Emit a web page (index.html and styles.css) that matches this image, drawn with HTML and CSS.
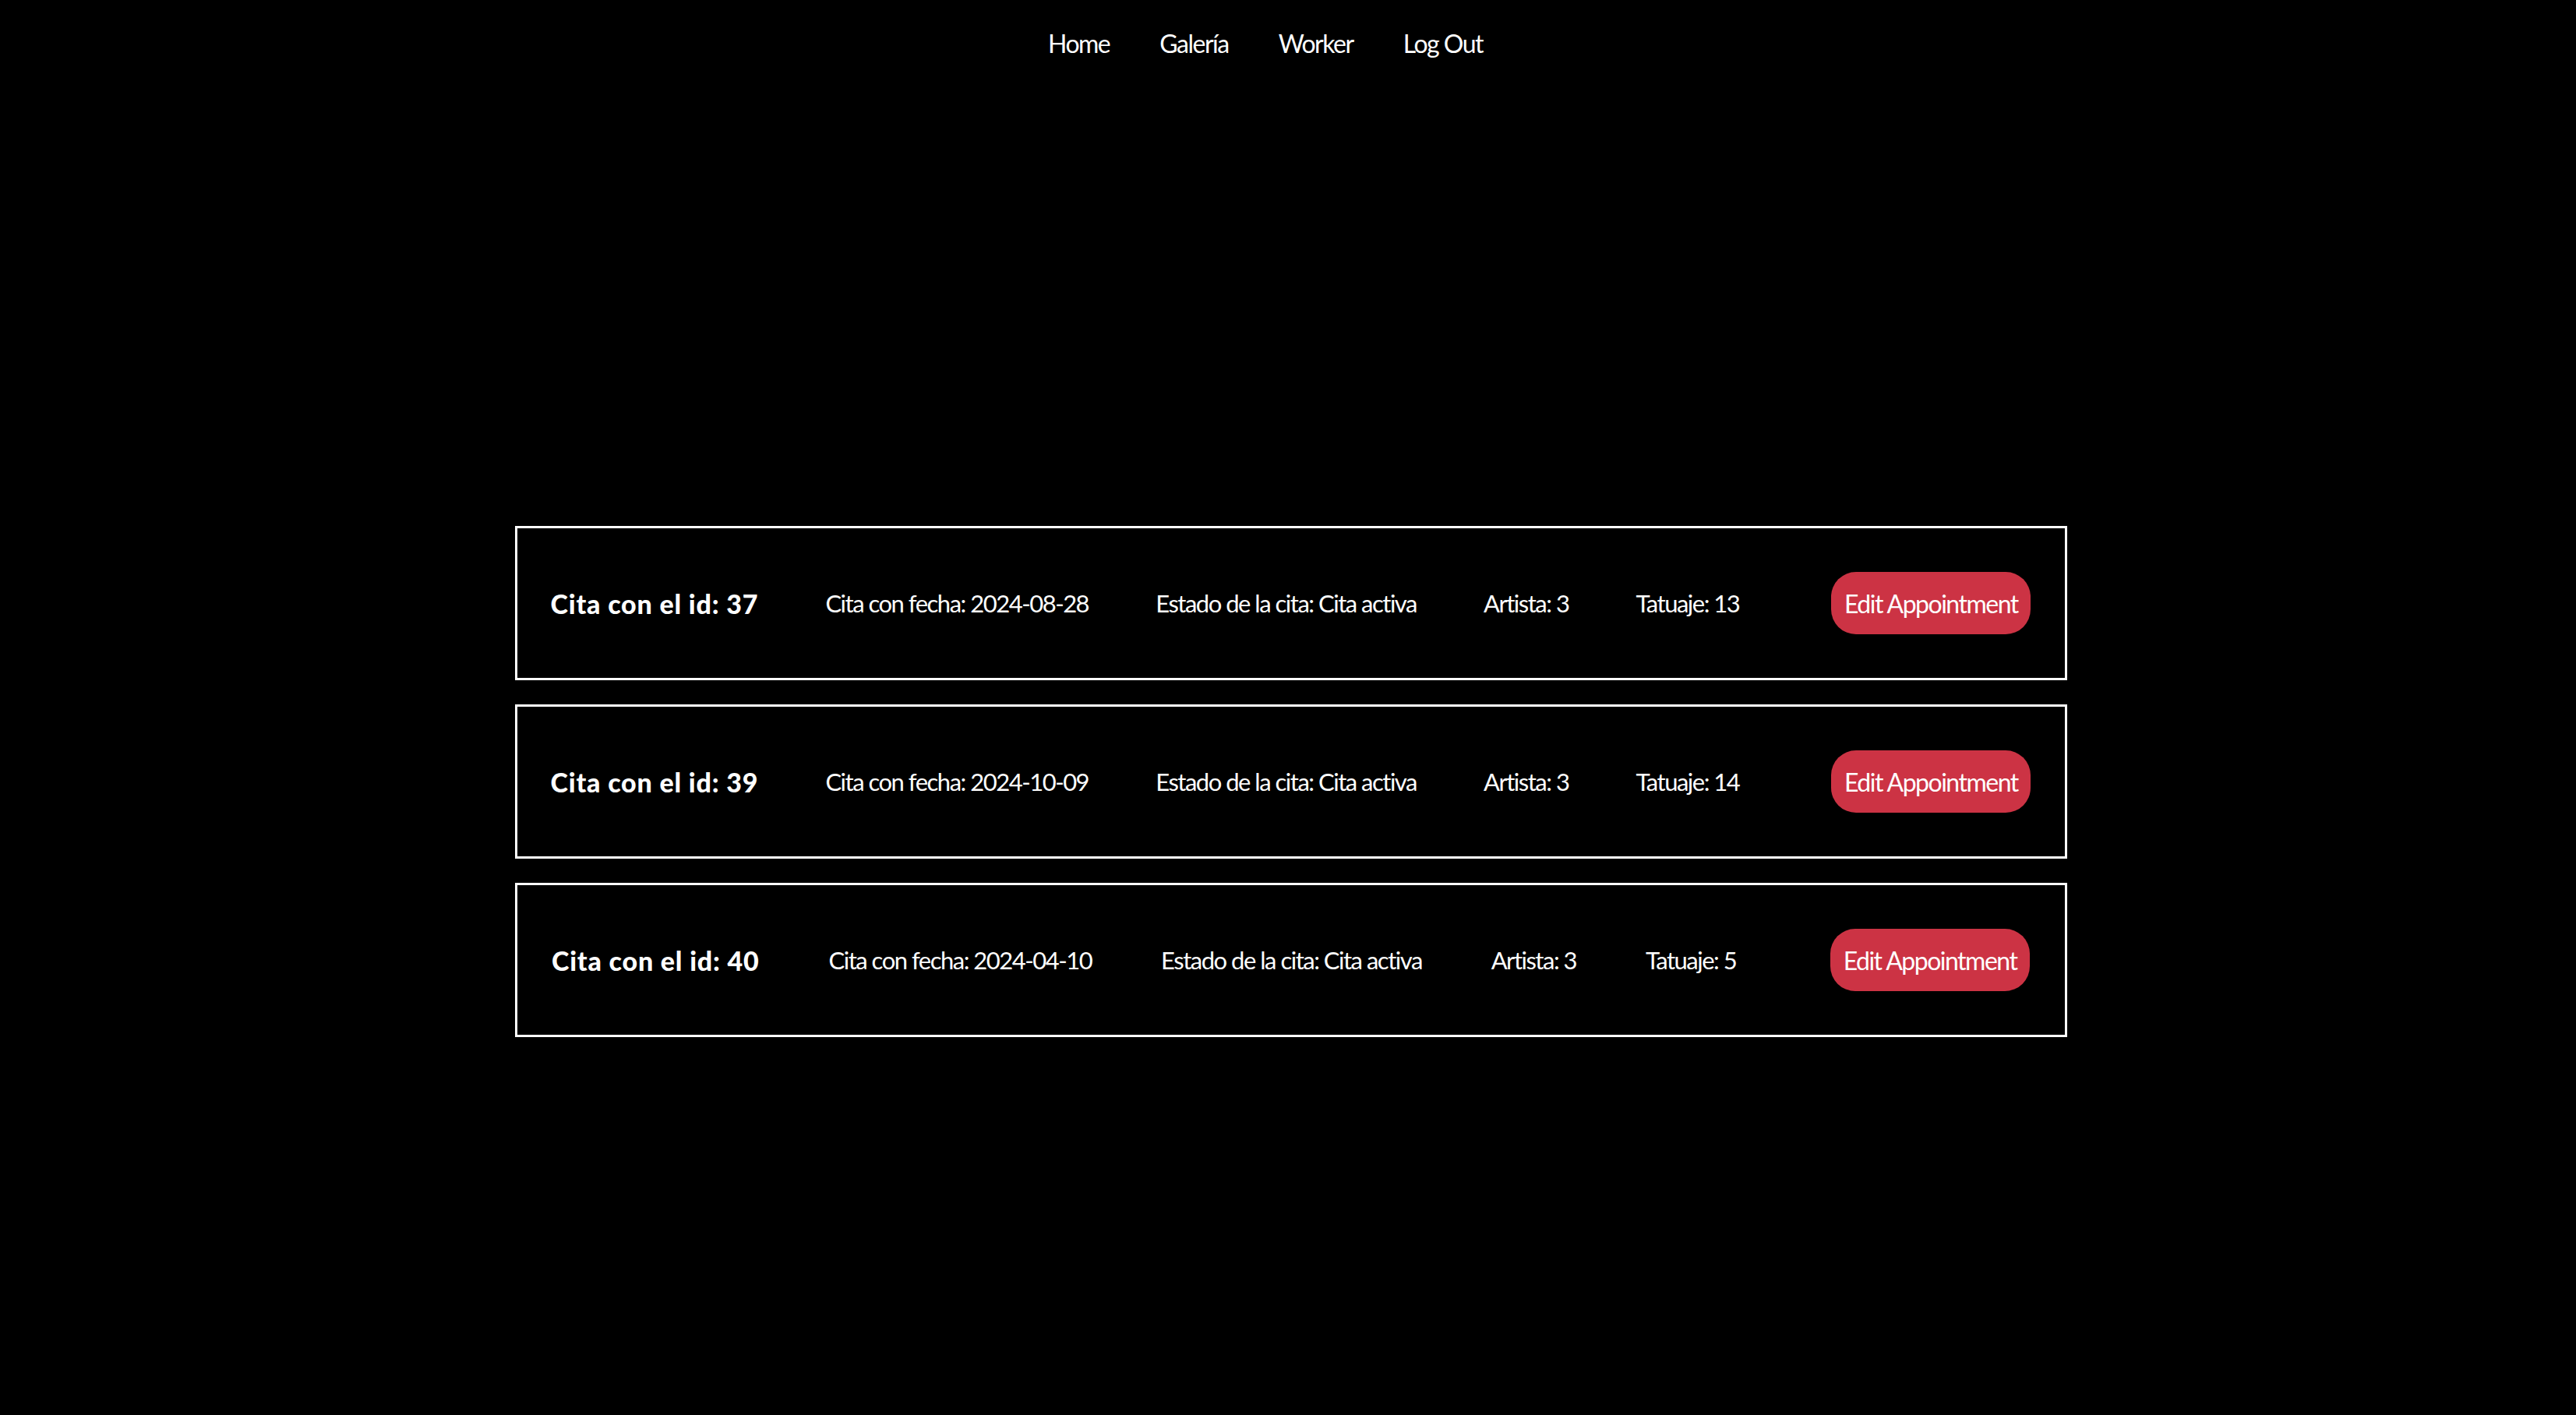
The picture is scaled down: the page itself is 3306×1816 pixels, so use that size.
FILE: index.html
```html
<!DOCTYPE html>
<html lang="es">
<head>
<meta charset="utf-8">
<title>Citas</title>
<link rel="stylesheet" href="styles.css">
</head>
<body>
<nav class="nav">
  <a class="nav-link" href="#">Home</a>
  <a class="nav-link" href="#">Galería</a>
  <a class="nav-link" href="#">Worker</a>
  <a class="nav-link" href="#">Log Out</a>
</nav>
<main class="list">
  <div class="card">
    <span class="cell cell-id">Cita con el id: 37</span>
    <span class="cell">Cita con fecha: 2024-08-28</span>
    <span class="cell">Estado de la cita: Cita activa</span>
    <span class="cell">Artista: 3</span>
    <span class="cell">Tatuaje: 13</span>
    <button class="edit">Edit Appointment</button>
  </div>
  <div class="card">
    <span class="cell cell-id">Cita con el id: 39</span>
    <span class="cell">Cita con fecha: 2024-10-09</span>
    <span class="cell">Estado de la cita: Cita activa</span>
    <span class="cell">Artista: 3</span>
    <span class="cell">Tatuaje: 14</span>
    <button class="edit">Edit Appointment</button>
  </div>
  <div class="card">
    <span class="cell cell-id">Cita con el id: 40</span>
    <span class="cell">Cita con fecha: 2024-04-10</span>
    <span class="cell">Estado de la cita: Cita activa</span>
    <span class="cell">Artista: 3</span>
    <span class="cell">Tatuaje: 5</span>
    <button class="edit">Edit Appointment</button>
  </div>
</main>
</body>
</html>
```
FILE: styles.css
```css
html, body {
  margin: 0;
  padding: 0;
  background: #000;
  color: #fff;
  font-family: "Lato", "Liberation Sans", sans-serif;
  font-weight: 400;
}
body {
  min-height: 1816px;
}
.nav {
  display: flex;
  justify-content: center;
  align-items: center;
  gap: 64px;
  height: 110px;
  padding-right: 58px;
}
.nav-link {
  color: #fff;
  text-decoration: none;
  font-size: 32px;
  letter-spacing: -1.5px;
}
.list {
  display: flex;
  flex-direction: column;
  align-items: center;
  gap: 31px;
  margin-top: 565px;
  padding-left: 7px;
}
.card {
  box-sizing: border-box;
  width: 1992px;
  height: 198px;
  border: 3px solid #fff;
  display: flex;
  align-items: center;
  justify-content: space-around;
  font-size: 31px;
  letter-spacing: -1.5px;
}
.cell-id {
  font-weight: 900;
  font-size: 34px;
  letter-spacing: 0.8px;
}
.edit {
  margin-left: 32px;
  width: 256px;
  height: 80px;
  border: none;
  border-radius: 32px;
  background: #cc3344;
  color: #fff;
  font-family: inherit;
  font-weight: 400;
  font-size: 32px;
  letter-spacing: -1.5px;
  padding: 0;
}
```
